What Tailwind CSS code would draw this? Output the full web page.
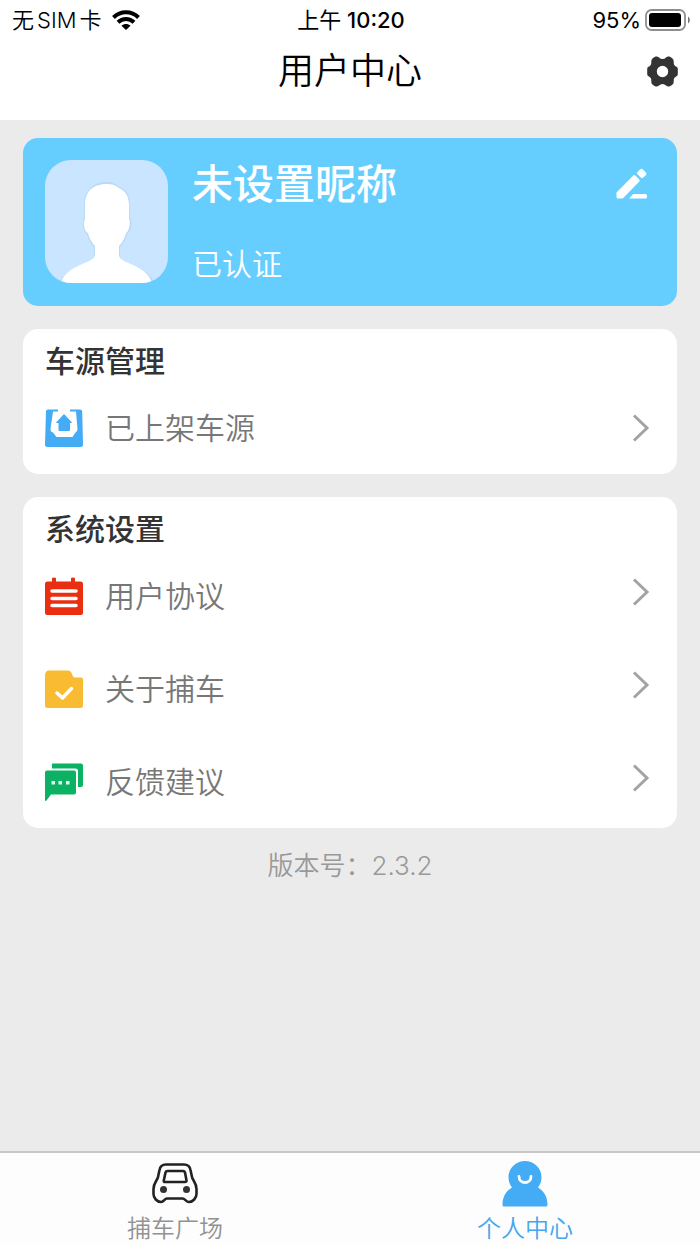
<!DOCTYPE html>
<html lang="zh-CN">
<head>
    <meta charset="UTF-8">
    <meta name="viewport" content="width=device-width, initial-scale=1.0">
    <title>用户中心</title>
    <script src="https://cdn.jsdelivr.net/npm/@tailwindcss/browser@4"></script>
</head>
<body class="min-h-screen flex flex-col bg-[#ebebeb] font-[Inter,'Noto_Sans_CJK_SC',sans-serif]">
    <header class="bg-white h-[120px]">
      <!-- status bar -->
      <div class="grid grid-cols-3 items-center h-10 pl-3 pr-[10px] text-[22px] leading-[40px] text-black">
        <div class="flex items-center gap-[10px]">
          <span class="flex gap-[3px] font-[350]"><span>无</span><span>SIM</span><span>卡</span></span>
          <svg class="w-7 h-5" viewBox="0 0 28 20" fill="none" stroke="#000" stroke-width="4">
            <path d="M1.500 7.500C8.500 0.500 19.500 0.500 26.500 7.500"/>
            <path d="M6 12.200C10.500 7.800 17.500 7.800 22 12.200"/>
            <path d="M14 20L9.500 15.700C12 13.400 16 13.400 18.500 15.700Z" fill="#000" stroke="none"/>
          </svg>
        </div>
        <span class="text-center font-medium"><span class="font-normal">上午</span> 10:20</span>
        <div class="flex items-center justify-end gap-1">
          <span>95%</span>
          <svg class="w-[45px] h-[22px]" viewBox="0 0 45 22">
            <rect x="1" y="1" width="39" height="20" rx="5.500" fill="none" stroke="#8e8e8e" stroke-width="1.800"/>
            <rect x="4" y="4" width="32" height="14" rx="3" fill="#000"/>
            <path d="M43 7.500C45.500 9 45.500 13 43 14.500Z" fill="#777"/>
          </svg>
        </div>
      </div>
      <div class="grid grid-cols-[1fr_auto_1fr] items-center h-[62px] px-[22px]">
        <span></span>
        <h1 class="text-[36px] leading-[50px] text-black font-[350]">用户中心</h1>
        <button aria-label="设置" class="justify-self-end">
          <svg class="w-[31px] h-[31px]" viewBox="0 0 31 31">
            <path fill="#333" fill-rule="evenodd" d="M8.500 0.600Q10.500 0 12 1.500Q13.500 3 15.500 3Q17.500 3 19 1.500Q20.500 0 22.500 0.600L25 2Q27 3.500 26.700 5.500Q26.500 8 27.500 9.200Q28.300 10.200 29.500 10.700Q30.800 11.300 30.800 13V18Q30.800 19.700 29.500 20.300Q28.300 20.800 27.500 21.800Q26.500 23 26.700 25.500Q27 27.500 25 29L22.500 30.400Q20.500 31 19 29.500Q17.500 28 15.500 28Q13.500 28 12 29.500Q10.500 31 8.500 30.400L6 29Q4 27.500 4.300 25.500Q4.500 23 3.500 21.800Q2.700 20.800 1.500 20.300Q0.200 19.700 0.200 18V13Q0.200 11.300 1.500 10.700Q2.700 10.200 3.500 9.200Q4.500 8 4.300 5.500Q4 3.500 6 2ZM15.500 9.800A5.700 5.700 0 1 0 15.500 21.200A5.700 5.700 0 1 0 15.500 9.800Z"/>
          </svg>
        </button>
      </div>
    </header>

    <main class="flex-1 flex flex-col gap-[23px] px-[23px] pt-[18px]">
      <section class="flex gap-6 rounded-[15px] bg-[#66ceff] p-[22px] text-white">
        <svg class="w-[123px] h-[123px] rounded-[26px] bg-[#c9e5ff]" viewBox="0 0 123 123">
          <path fill="#a9cdee" opacity=".5" d="M39 45C39 30 49 22 62 22C70 22 72 26 77 28C83 31 86 40 85 50V58C88 62 86 72 82 74C81 79 78 84 75 87V96C78 106 104 106 109 123H15C20 106 46 106 49 96V87C46 84 43 79 42 74C38 72 37 62 39 58Z"/>
          <path fill="#fff" d="M40 45C40 30 49 24 62 24C70 24 72 27 76 29C82 32 85 40 84 50V59C86 62 84 72 81 73C80 78 77 83 74 86V95C74 104 102 104 107 123H16C21 104 49 104 50 95V86C47 83 44 78 43 73C39 72 38 62 40 59Z"/>
        </svg>
        <div class="flex-1">
          <h2 class="text-[41px] leading-[48px] font-medium">未设置昵称</h2>
          <p class="mt-9 text-[30px] leading-[40px] font-[350]">已认证</p>
        </div>
        <button aria-label="编辑" class="self-start mt-2 mr-2">
          <svg class="w-[31px] h-[31px]" viewBox="0 0 31 31" fill="#fff">
            <path d="M0.500 24.500L17.300 7.500Q18.300 6.600 19.300 7.500L23.300 11.600Q24.200 12.600 23.300 13.500L7.500 29.800Q6.800 30.500 6 30.500H2Q0.500 30.500 0.500 29V24.500Z"/>
            <path d="M21.300 4.300L24.300 1.200Q25.500 0.200 26.700 1.200L30 4.700Q31 5.700 30 6.900L27 9.800Q26 10.700 25 9.800L21.300 6.100Q20.500 5.200 21.300 4.300Z"/>
            <path d="M13 30.500L17.300 26H29.500Q31 26 31 27.500V29Q31 30.500 29.500 30.500Z"/>
          </svg>
        </button>
      </section>

      <section class="rounded-[15px] bg-white pt-3 px-[22px]">
        <h2 class="text-[30px] leading-[40px] text-[#333] font-medium">车源管理</h2>
        <a href="#" class="flex items-center h-[93px] pr-[5px]">
          <svg class="w-[38px] h-[38px]" viewBox="0 0 38 38">
            <path fill="#44abf5" d="M3 0.500H13V2.500H8L5.500 20Q5.500 23 8 23.500L11.500 28H27.500L30.500 23.500Q32.500 23 32.500 20L31 2.500H25V0.500H35Q37 0.500 37.200 2.500L38 35.500Q38 38 35.500 38H2.500Q0 38 0 35.500L1 2.500Q1 0.500 3 0.500Z"/>
            <path fill="#44abf5" stroke="#44abf5" stroke-linejoin="round" d="M19 5.500L26.500 13.500H24.500V21.500H14V13.500H11.500Z"/>
          </svg>
          <span class="flex-1 ml-[22px] text-[30px] leading-[40px] text-[#777] font-[350]">已上架车源</span>
          <svg class="w-[18px] h-7" viewBox="0 0 18 28" fill="none" stroke="#a3a3a3" stroke-width="3"><path d="M2 1.500L15 14L2 26.500"/></svg>
        </a>
      </section>

      <section class="rounded-[15px] bg-white pt-3 px-[22px]">
        <h2 class="text-[30px] leading-[40px] text-[#333] font-medium">系统设置</h2>
        <a href="#" class="flex items-center h-[93px] pr-[5px]">
          <svg class="w-[38px] h-[38px]" viewBox="0 0 38 38">
            <path fill="#ea2f10" d="M7 4.500V1.500Q7 0.500 9 0.500Q11 0.500 11 1.500V4.500H26V1.500Q26 0.500 28 0.500Q30 0.500 30 1.500V4.500H35.500Q38 4.500 38 7V35.500Q38 38 35.500 38H2.500Q0 38 0 35.500V7Q0 4.500 2.500 4.500Z"/>
            <path stroke="#fff" stroke-width="3.500" stroke-linecap="round" d="M7 14H31M7 21.500H31M7 28.500H31"/>
          </svg>
          <span class="flex-1 ml-[22px] text-[30px] leading-[40px] text-[#777] font-[350]">用户协议</span>
          <svg class="w-[18px] h-7 mb-2" viewBox="0 0 18 28" fill="none" stroke="#a3a3a3" stroke-width="3"><path d="M2 1.500L15 14L2 26.500"/></svg>
        </a>
        <a href="#" class="flex items-center h-[93px] pr-[5px]">
          <svg class="w-[38px] h-[38px]" viewBox="0 0 38 38">
            <path fill="#f9bb32" d="M4 0.500H23Q25.500 0.500 26.300 2.500L28 6.500Q28.500 7.500 30 7.500H36Q38 7.500 38 9.500V35.500Q38 38 35.500 38H2.500Q0 38 0 35.500V6Q0 0.500 4 0.500Z"/>
            <path fill="none" stroke="#fff" stroke-width="3.500" stroke-linecap="round" stroke-linejoin="round" d="M12 23L17.500 28L26.500 18.500"/>
          </svg>
          <span class="flex-1 ml-[22px] text-[30px] leading-[40px] text-[#777] font-[350]">关于捕车</span>
          <svg class="w-[18px] h-7 mb-2" viewBox="0 0 18 28" fill="none" stroke="#a3a3a3" stroke-width="3"><path d="M2 1.500L15 14L2 26.500"/></svg>
        </a>
        <a href="#" class="flex items-center h-[93px] pr-[5px]">
          <svg class="w-[38px] h-[38px]" viewBox="0 0 38 38">
            <path fill="#0cb263" d="M7 0.500H36Q38 0.500 38 2.500V22Q38 24 36 24H33V8Q33 5.500 30.500 5.500H7Z"/>
            <path fill="#0cb263" d="M2 7.500H29Q31 7.500 31 9.500V29.500Q31 31.500 29 31.500H6L1.500 37.500Q0 38.500 0 37V9.500Q0 7.500 2 7.500Z"/>
            <path fill="#dff5e9" d="M6.500 18H10V21.500H6.500ZM13.500 18H17V21.500H13.500ZM21 18H24.500V21.500H21Z"/>
          </svg>
          <span class="flex-1 ml-[22px] text-[30px] leading-[40px] text-[#777] font-[350]">反馈建议</span>
          <svg class="w-[18px] h-7 mb-2" viewBox="0 0 18 28" fill="none" stroke="#a3a3a3" stroke-width="3"><path d="M2 1.500L15 14L2 26.500"/></svg>
        </a>
      </section>

      <p class="text-center text-[26px] leading-[30px] text-[#999] font-[350]">版本号：2.3.2</p>
    </main>

    <nav class="grid grid-cols-2 h-[93px] border-t-2 border-[#c8c8c8] bg-[#fdfdfd] text-[24px] leading-[36px] font-[350]">
      <a href="#" class="flex flex-col items-center gap-1 pt-2 text-[#929292]">
        <svg class="w-[46px] h-[46px]" viewBox="0 0 46 46" fill="none" stroke="#222" stroke-width="2.600" stroke-linejoin="round">
          <path d="M14 3.500H32C36 3.500 38 6 38.500 9L40 16C40.500 19 44.500 22 44.500 28V33C44.500 37 41 41 37 41C34 41 33 37.500 30.500 37.500H15C12.500 37.500 12 41 9 41C5 41 1.500 37 1.500 33V28C1.500 22 5.500 19 6 16L7.500 9C8 6 10 3.500 14 3.500Z"/>
          <path d="M15.500 10H31Q32.500 10 33 11.500L34.500 19.500Q34.500 21 33 21H13Q11.500 21 11.800 19.500L13.500 11.500Q14 10 15.500 10Z"/>
          <circle cx="11.500" cy="28.500" r="3.500" fill="#333" stroke="none"/>
          <circle cx="34.500" cy="28.500" r="3.500" fill="#333" stroke="none"/>
        </svg>
        <span>捕车广场</span>
      </a>
      <a href="#" class="flex flex-col items-center gap-1 pt-2 text-[#44a6ee]">
        <svg class="w-[46px] h-[46px]" viewBox="0 0 46 46">
          <path fill="#44abf5" d="M23 0C32 0 39.500 7 39.500 16C39.500 20 38.500 23 36 26.500C42 30 45.500 36 45.500 44Q45.500 45.500 44 45.500H2Q0.500 45.500 0.500 44C0.500 36 4 30 10 26.500C7.500 23 6.500 20 6.500 16C6.500 7 14 0 23 0Z"/>
          <path fill="none" stroke="#fff" stroke-width="2.800" stroke-linecap="round" d="M17 15.500C17 23.500 29 23.500 29 15.500"/>
        </svg>
        <span>个人中心</span>
      </a>
    </nav>
</body>
</html>
